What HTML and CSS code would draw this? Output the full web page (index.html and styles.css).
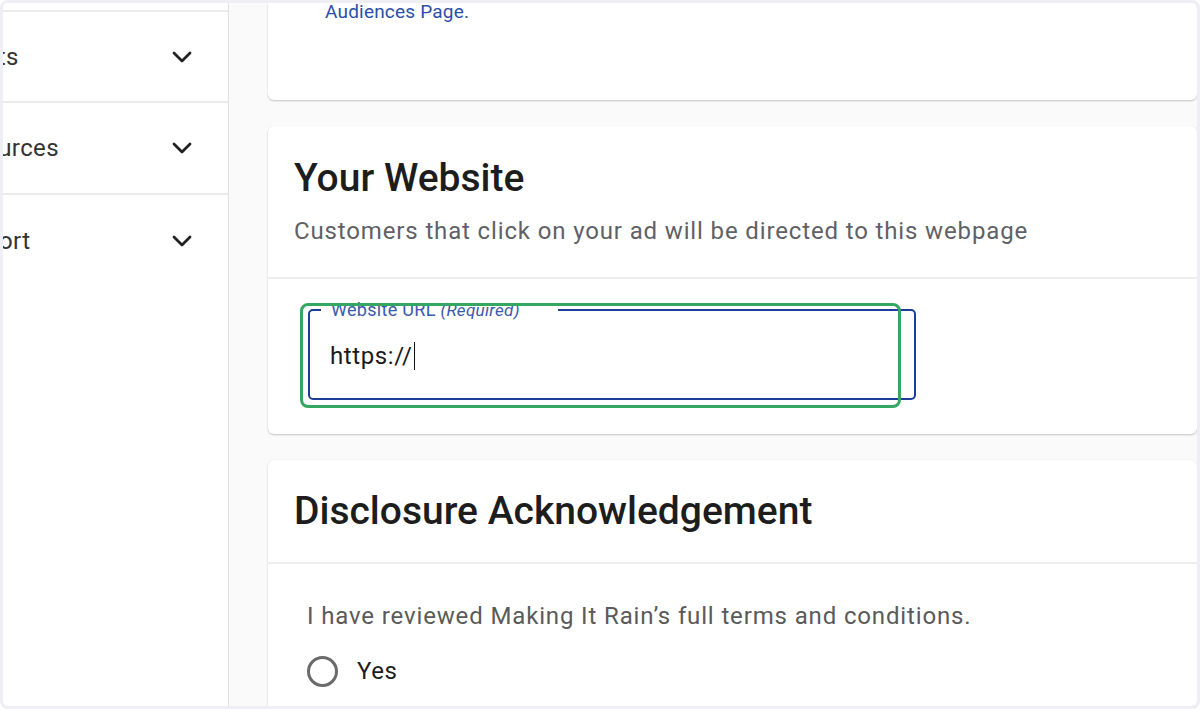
FILE: index.html
```html
<!DOCTYPE html>
<html lang="en">
<head>
<meta charset="utf-8">
<title>Campaign setup</title>
<link rel="stylesheet" href="styles.css">
</head>
<body>
<div class="frame">
  <nav class="sidebar">
    <div class="nav-item nav-item--first">
      <span class="nav-label">Assets</span>
      <svg class="chev" width="20" height="12" viewBox="0 0 20 12"><polyline points="2,2 10,10 18,2"/></svg>
    </div>
    <div class="nav-item">
      <span class="nav-label">Resources</span>
      <svg class="chev" width="20" height="12" viewBox="0 0 20 12"><polyline points="2,2 10,10 18,2"/></svg>
    </div>
    <div class="nav-item nav-item--last">
      <span class="nav-label">Support</span>
      <svg class="chev" width="20" height="12" viewBox="0 0 20 12"><polyline points="2,2 10,10 18,2"/></svg>
    </div>
  </nav>
  <main class="main">
    <section class="card card--top">
      <p class="link-text">Audiences Page.</p>
    </section>
    <section class="card card--website">
      <header class="card-head card-head--website">
        <h2 class="card-title">Your Website</h2>
        <p class="card-sub">Customers that click on your ad will be directed to this webpage</p>
      </header>
      <div class="card-body card-body--website">
        <div class="field">
          <fieldset class="outline">
            <legend class="outline-label">Website URL <em class="req">(Required)</em></legend>
            <div class="url-value">https://<span class="caret"></span></div>
          </fieldset>
          <div class="highlight"></div>
        </div>
      </div>
    </section>
    <section class="card card--disclosure">
      <header class="card-head card-head--disclosure">
        <h2 class="card-title">Disclosure Acknowledgement</h2>
      </header>
      <div class="card-body card-body--disclosure">
        <p class="terms">I have reviewed Making It Rain’s full terms and conditions.</p>
        <label class="radio-row">
          <span class="radio"></span>
          <span class="radio-text">Yes</span>
        </label>
      </div>
    </section>
  </main>
</div>
</body>
</html>
```

FILE: styles.css
```css
* { box-sizing: border-box; }

html, body {
  margin: 0;
  padding: 0;
  background: #ffffff;
}

body {
  font-family: Roboto, "Liberation Sans", Arial, sans-serif;
}

.frame {
  width: 1200px;
  height: 709px;
  border: 3px solid #efeef4;
  border-radius: 8px;
  overflow: hidden;
  display: flex;
  background: #fafafa;
}

/* Sidebar */
.sidebar {
  width: 226px;
  flex: 0 0 226px;
  background: #ffffff;
  border-right: 1px solid #e2e2e2;
  padding-top: 7px;
  overflow: hidden;
}

.nav-item {
  height: 92px;
  display: flex;
  align-items: center;
  justify-content: space-between;
  padding-right: 36px;
  border-bottom: 2px solid #ebebeb;
}

.nav-item--first {
  border-top: 2px solid #ebebeb;
  height: 93px;
}

.nav-item--last {
  border-bottom: none;
}

.nav-label {
  margin-left: -60px;
  font-size: 24px;
  letter-spacing: 0.4px;
  color: #333333;
  white-space: nowrap;
}

.chev {
  display: block;
}

.chev polyline {
  fill: none;
  stroke: #222222;
  stroke-width: 2.8;
  stroke-linecap: round;
  stroke-linejoin: round;
}

/* Main */
.main {
  flex: 1;
  padding-left: 39px;
  display: flex;
  flex-direction: column;
  gap: 26px;
  overflow: hidden;
}

.card {
  background: #ffffff;
  border-radius: 6px;
  box-shadow: 0 1px 2px rgba(0, 0, 0, 0.22), 0 0 1px rgba(0, 0, 0, 0.06);
  flex-shrink: 0;
}

.card--top {
  height: 97px;
  border-top-left-radius: 0;
  border-top-right-radius: 0;
}

.link-text {
  margin: 0;
  padding-left: 57px;
  font-size: 19px;
  letter-spacing: 0.2px;
  line-height: 18px;
  color: #2b4fa9;
}

.card-head {
  border-bottom: 2px solid #eeeeee;
  padding-left: 26px;
}

.card-head--website {
  padding-top: 30px;
  padding-bottom: 31px;
}

.card-head--disclosure {
  padding-top: 29px;
  padding-bottom: 29px;
}

.card-title {
  margin: 0;
  font-size: 39px;
  line-height: 44px;
  font-weight: 500;
  color: #1d1d1d;
}

.card-sub {
  margin: 16px 0 0;
  font-size: 24px;
  letter-spacing: 0.86px;
  line-height: 30px;
  color: #5f6166;
}

.card-body--website {
  padding: 21px 0 34px 40px;
}

.field {
  position: relative;
  width: 608px;
}

.outline {
  margin: 0;
  padding: 0 0 27px 0;
  border: 2px solid #1b3e97;
  border-radius: 5px;
  min-width: 0;
}

.outline-label {
  margin-left: 11px;
  padding: 0 38px 0 10px;
  font-size: 18px;
  letter-spacing: 0.3px;
  line-height: 20px;
  color: #3b5aab;
}

.req {
  font-size: 17px;
}

.url-value {
  padding: 21px 20px 0 20px;
  font-size: 24px;
  letter-spacing: 0.6px;
  line-height: 30px;
  color: #1a1a1a;
  display: flex;
  align-items: center;
}

.caret {
  display: inline-block;
  width: 1px;
  height: 28px;
  background: #111111;
  margin-left: 1px;
}

.highlight {
  position: absolute;
  left: -8px;
  top: 3px;
  width: 601px;
  height: 105px;
  border: 3px solid #34a862;
  border-radius: 8px;
  pointer-events: none;
}

.card--disclosure {
  flex: 1;
  border-bottom-left-radius: 0;
  border-bottom-right-radius: 0;
}

.card-body--disclosure {
  padding: 37px 0 0 39px;
}

.terms {
  margin: 0;
  font-size: 24px;
  letter-spacing: 0.86px;
  line-height: 30px;
  color: #5a5a5a;
}

.radio-row {
  margin-top: 23px;
  display: flex;
  align-items: center;
  gap: 19px;
  height: 34px;
}

.radio {
  width: 31px;
  height: 31px;
  border: 3px solid #6a6a6a;
  border-radius: 50%;
  flex-shrink: 0;
}

.radio-text {
  font-size: 24px;
  letter-spacing: 0.5px;
  color: #1d1d1d;
}
```
